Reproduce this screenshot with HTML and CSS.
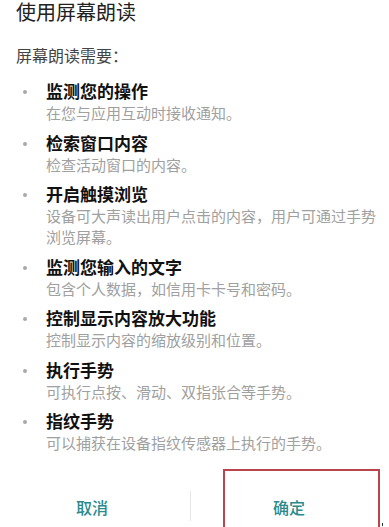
FILE: index.html
```html
<!DOCTYPE html>
<html lang="zh-CN">
<head>
<meta charset="utf-8">
<link rel="stylesheet" href="styles.css">
</head>
<body>
<div class="dialog">
  <h1 class="title">使用屏幕朗读</h1>
  <p class="lead">屏幕朗读需要：</p>
  <ul class="perms">
    <li class="perm"><div class="perm-title">监测您的操作</div><div class="perm-desc">在您与应用互动时接收通知。</div></li>
    <li class="perm"><div class="perm-title">检索窗口内容</div><div class="perm-desc">检查活动窗口的内容。</div></li>
    <li class="perm"><div class="perm-title">开启触摸浏览</div><div class="perm-desc">设备可大声读出用户点击的内容，用户可通过手势浏览屏幕。</div></li>
    <li class="perm"><div class="perm-title">监测您输入的文字</div><div class="perm-desc">包含个人数据，如信用卡卡号和密码。</div></li>
    <li class="perm"><div class="perm-title">控制显示内容放大功能</div><div class="perm-desc">控制显示内容的缩放级别和位置。</div></li>
    <li class="perm"><div class="perm-title">执行手势</div><div class="perm-desc">可执行点按、滑动、双指张合等手势。</div></li>
    <li class="perm"><div class="perm-title">指纹手势</div><div class="perm-desc">可以捕获在设备指纹传感器上执行的手势。</div></li>
  </ul>
  <div class="actions">
    <button class="btn btn-cancel">取消</button>
    <span class="divider"></span>
    <button class="btn btn-ok">确定</button>
    <span class="highlight"></span>
    <span class="mark"></span>
  </div>
</div>
</body>
</html>
```
FILE: styles.css
```css
html, body {
  margin: 0;
  padding: 0;
  background: #fff;
  height: 527px;
  overflow: hidden;
}
body {
  font-family: "Noto Sans CJK SC", "Noto Sans", sans-serif;
  color: #222;
}
.dialog {
  padding: 0 0 0 16px;
}
.title {
  margin: 0;
  font-size: 20px;
  line-height: 23px;
  font-weight: 400;
  color: #222;
}
.lead {
  margin: 21px 0 0;
  font-size: 16px;
  line-height: 22px;
  color: #444;
}
.perms {
  list-style: none;
  margin: 14px 0 0;
  padding: 0;
}
.perm {
  position: relative;
  padding-left: 30px;
  margin-bottom: 8.5px;
  padding-right: 6px;
}
.perm::before {
  content: "";
  position: absolute;
  left: 7px;
  top: 10px;
  width: 4px;
  height: 4px;
  border-radius: 50%;
  background: #a8a8a8;
}
.perm-title {
  font-size: 17px;
  line-height: 22px;
  font-weight: 700;
  color: #111;
}
.perm-desc {
  font-size: 15px;
  line-height: 21px;
  color: #a0a0a0;
}
.actions {
  position: relative;
  display: flex;
  margin: 16px 0 0 -16px;
  height: 59px;
}
.btn {
  border: 0;
  background: none;
  padding: 27px 0 0;
  font-family: inherit;
  font-size: 16px;
  line-height: 22px;
  font-weight: 500;
  color: #2b8a8c;
  align-self: flex-start;
}
.btn-cancel {
  width: 184px;
}
.divider {
  width: 1px;
  height: 30px;
  margin: 22px 6px 0;
  background: #e6e6e6;
}
.btn-ok {
  width: 184px;
}
.highlight {
  position: absolute;
  left: 223px;
  top: 0;
  width: 153px;
  height: 70px;
  border: 2px solid #b8444c;
}
.mark {
  position: absolute;
  left: 382px;
  top: 54px;
  width: 1px;
  height: 3px;
  background: #333;
}
```
